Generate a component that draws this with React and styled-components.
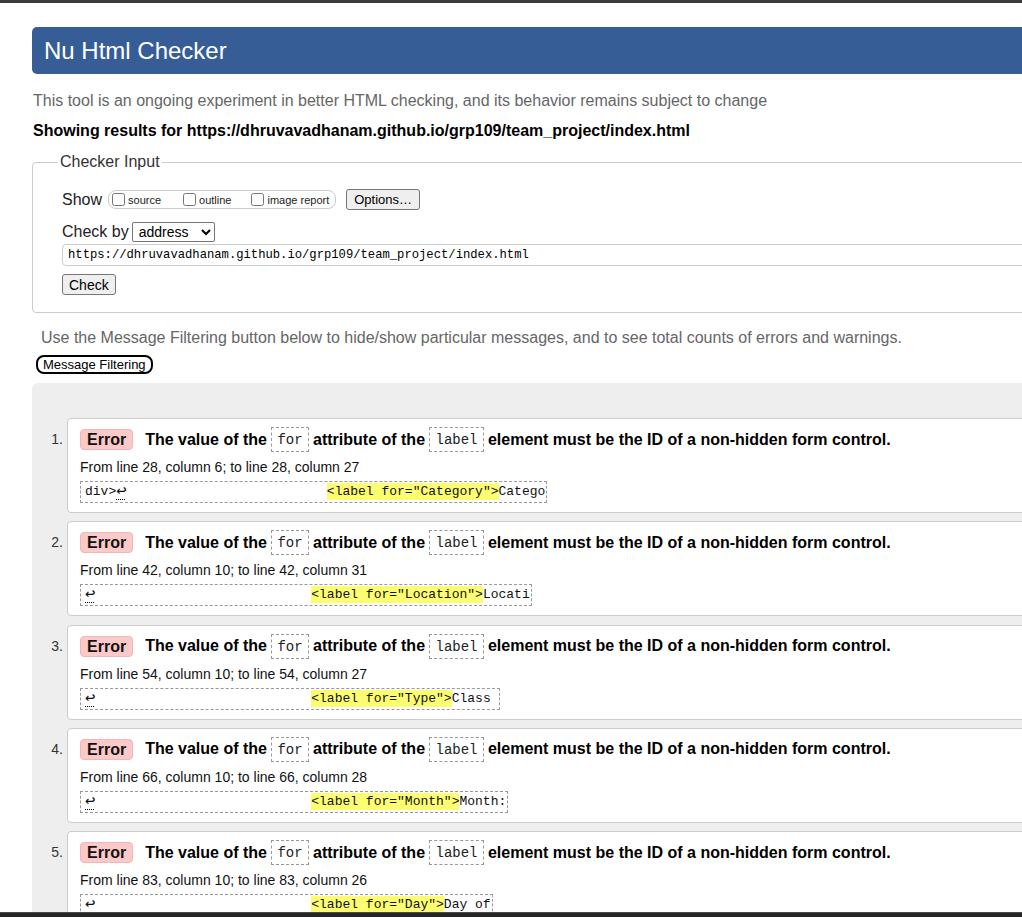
import styled, { createGlobalStyle } from "styled-components";

const GlobalStyle = createGlobalStyle`
  html, body {
    margin: 0;
    padding: 0;
    background: #fff;
    overflow: hidden;
  }
  body {
    font-family: "Liberation Sans", Arial, sans-serif;
    color: #000;
  }
`;

const TopBar = styled.div`
  height: 3px;
  background: #3b3b3b;
`;

const BottomBar = styled.div`
  position: fixed;
  left: 0;
  right: 0;
  bottom: 0;
  height: 4px;
  background: #262626;
  border-top: 1px solid #4a4a4a;
`;

const Page = styled.div`
  width: 1100px;
  padding-left: 32px;
`;

const Header = styled.h1`
  margin: 24px 0 0;
  height: 47px;
  line-height: 47px;
  padding-left: 12px;
  background: #365d95;
  border-radius: 5px;
  color: #fff;
  font-size: 24px;
  font-weight: normal;
`;

const Intro = styled.p`
  margin: 18px 0 0 1px;
  font-size: 16px;
  line-height: 18px;
  color: #666;
`;

const Showing = styled.p`
  margin: 12px 0 0 1px;
  font-size: 16px;
  line-height: 18px;
  font-weight: bold;
`;

const Fieldset = styled.fieldset`
  margin: 13px 0 0;
  padding: 18px 0 17px 29px;
  border: 1px solid #ccc;
  border-radius: 4px;
  display: flex;
  flex-direction: column;
  align-items: flex-start;
`;

const Legend = styled.legend`
  margin-left: -4px;
  padding: 0 2px;
  font-size: 16px;
  line-height: 18px;
  color: #333;
`;

const Row = styled.div`
  display: flex;
  align-items: center;
  height: ${(p) => p.$h}px;
  margin-bottom: ${(p) => p.$mb || 0}px;
`;

const Label = styled.span`
  font-size: 16px;
  color: #222;
  margin-right: ${(p) => p.$mr}px;
`;

const CheckGroup = styled.span`
  display: flex;
  align-items: center;
  height: 17px;
  padding: 0 6px 0 3px;
  border: 1px solid #ccc;
  border-radius: 8px;
`;

const Checkbox = styled.input.attrs({ type: "checkbox" })`
  width: 13px;
  height: 13px;
  margin: 0 3px 0 0;
`;

const CheckLabel = styled.label`
  display: flex;
  align-items: center;
  font-size: 11px;
  color: #222;
  margin-right: ${(p) => p.$mr || 0}px;
`;

const Button = styled.button`
  height: ${(p) => p.$h || 21}px;
  padding: 0 ${(p) => p.$px || 7}px;
  margin-left: ${(p) => p.$ml || 0}px;
  font-family: "Liberation Sans", Arial, sans-serif;
  font-size: ${(p) => p.$fs || 13}px;
  color: #000;
  background: #efefef;
  border: 1px solid #767676;
  border-radius: 3px;
`;

const Select = styled.select`
  width: 83px;
  height: 20px;
  font-family: "Liberation Sans", Arial, sans-serif;
  font-size: 14px;
  padding: 0 2px;
  border: 1px solid #767676;
  border-radius: 2px;
  background: #fff;
  color: #000;
`;

const UrlInput = styled.input`
  box-sizing: border-box;
  width: 1040px;
  height: 22px;
  padding: 0 5px;
  font-family: "Liberation Mono", "DejaVu Sans Mono", monospace;
  font-size: 12.2px;
  color: #000;
  border: 1px solid #ccc;
  border-radius: 4px;
`;

const FilterHint = styled.p`
  margin: 16px 0 0 9px;
  font-size: 16px;
  line-height: 18px;
  color: #666;
`;

const FilterButton = styled.button`
  display: block;
  margin: 8px 0 0 4px;
  height: 19px;
  padding: 0 5px;
  background: #fff;
  border: 2px solid #000;
  border-radius: 8px;
  font-family: "Liberation Sans", Arial, sans-serif;
  font-size: 13px;
  color: #000;
  line-height: 14px;
`;

const MessageArea = styled.div`
  margin-top: 9px;
  padding-top: 35px;
  min-height: 600px;
  background: #eee;
  border-radius: 6px 0 0 0;
`;

const Item = styled.div`
  display: grid;
  grid-template-columns: 35px 1fr;
  margin-bottom: 8.25px;
`;

const ItemNumber = styled.div`
  padding: 11px 4px 0 0;
  text-align: right;
  font-size: 14px;
  line-height: 21px;
  color: #333;
`;

const Card = styled.div`
  background: #fff;
  border: 1px solid #ccc;
  border-radius: 4px;
  padding: 10px 12px 9px;
`;

const CardHead = styled.div`
  display: flex;
  align-items: center;
  height: 21px;
  font-size: 16px;
  font-weight: bold;
  white-space: pre;
`;

const Badge = styled.span`
  display: inline-block;
  height: 19px;
  line-height: 19px;
  padding: 0 6px;
  margin-right: 12px;
  background: #fcc9c9;
  border: 1px solid #efb7b7;
  border-radius: 4px;
  color: #111;
`;

const Code = styled.code`
  display: inline-block;
  height: 23px;
  line-height: 24px;
  padding: 0 5px;
  border: 1px dashed #999;
  font-family: "Liberation Mono", "DejaVu Sans Mono", monospace;
  font-size: 14px;
  font-weight: normal;
  color: #222;
`;

const Location = styled.div`
  margin-top: 9px;
  font-size: 14px;
  line-height: 16px;
  color: #111;
`;

const Extract = styled.div`
  width: fit-content;
  margin-top: 6px;
  height: 20px;
  line-height: 20px;
  padding: 0 1px 0 4px;
  border: 1px dashed #999;
  font-family: "Liberation Mono", "DejaVu Sans Mono", monospace;
  font-size: 13px;
  color: #111;
  white-space: pre;
`;

const Return = styled.span`
  display: inline-block;
  width: 7.8px;
  font-size: 17px;
  line-height: 19px;
  vertical-align: top;
  overflow: visible;
  text-decoration: underline dotted #000;
  text-decoration-thickness: 1px;
  text-underline-offset: 3px;
`;

const Highlight = styled.mark`
  background: #fdfd72;
  color: #111;
  padding: 1px 0;
`;

const messages = [
  { from: "From line 28, column 6; to line 28, column 27", pre: "div>", pad: 26, hl: '<label for="Category">', tail: "Catego" },
  { from: "From line 42, column 10; to line 42, column 31", pre: "", pad: 28, hl: '<label for="Location">', tail: "Locati" },
  { from: "From line 54, column 10; to line 54, column 27", pre: "", pad: 28, hl: '<label for="Type">', tail: "Class " },
  { from: "From line 66, column 10; to line 66, column 28", pre: "", pad: 28, hl: '<label for="Month">', tail: "Month:" },
  { from: "From line 83, column 10; to line 83, column 26", pre: "", pad: 28, hl: '<label for="Day">', tail: "Day of" },
];

export default function App() {
  return (
    <>
      <GlobalStyle />
      <TopBar />
      <Page>
        <Header>Nu Html Checker</Header>
        <Intro>This tool is an ongoing experiment in better HTML checking, and its behavior remains subject to change</Intro>
        <Showing>Showing results for https://dhruvavadhanam.github.io/grp109/team_project/index.html</Showing>

        <Fieldset>
          <Legend>Checker Input</Legend>
          <Row $h={21} $mb={12}>
            <Label $mr={6}>Show</Label>
            <CheckGroup>
              <CheckLabel $mr={22}><Checkbox />source</CheckLabel>
              <CheckLabel $mr={20}><Checkbox />outline</CheckLabel>
              <CheckLabel><Checkbox />image report</CheckLabel>
            </CheckGroup>
            <Button $ml={10}>Options…</Button>
          </Row>
          <Row $h={20} $mb={2}>
            <Label $mr={3}>Check by</Label>
            <Select defaultValue="address">
              <option value="address">address</option>
            </Select>
          </Row>
          <Row $h={22} $mb={8}>
            <UrlInput readOnly value="https://dhruvavadhanam.github.io/grp109/team_project/index.html" />
          </Row>
          <Row $h={21}>
            <Button $fs={14} $px={6}>Check</Button>
          </Row>
        </Fieldset>

        <FilterHint>Use the Message Filtering button below to hide/show particular messages, and to see total counts of errors and warnings.</FilterHint>
        <FilterButton>Message Filtering</FilterButton>

        <MessageArea>
          {messages.map((m, i) => (
            <Item key={i}>
              <ItemNumber>{i + 1}.</ItemNumber>
              <Card>
                <CardHead>
                  <Badge>Error</Badge>
                  {"The value of the "}
                  <Code>for</Code>
                  {" attribute of the "}
                  <Code>label</Code>
                  {" element must be the ID of a non-hidden form control."}
                </CardHead>
                <Location>{m.from}</Location>
                <Extract>
                  {m.pre}
                  <Return>↩</Return>
                  {" ".repeat(m.pad)}
                  <Highlight>{m.hl}</Highlight>
                  {m.tail}
                </Extract>
              </Card>
            </Item>
          ))}
        </MessageArea>
      </Page>
      <BottomBar />
    </>
  );
}
